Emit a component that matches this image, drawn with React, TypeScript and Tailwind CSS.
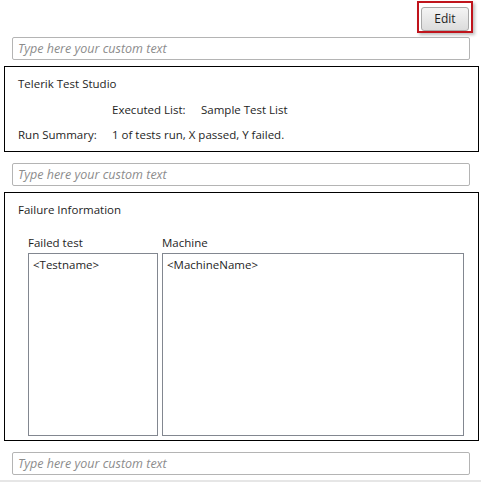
import React from 'react';

const font = { fontFamily: '"Open Sans", "Segoe UI", sans-serif' };

function CustomText() {
  return (
    <div className="ml-[12px] w-[458px] h-[23px] rounded-[2px] border border-[#b4b4b4] bg-white flex items-center pl-[5px]">
      <span className="italic text-[12.5px] leading-[16px] text-[#8c8c8c]">Type here your custom text</span>
    </div>
  );
}

export default function App() {
  return (
    <div className="w-[481px] h-[482px] bg-white overflow-hidden text-[#1e1e1e]" style={font}>
      <div className="flex justify-end pr-[8px] pt-[1px]">
        <div className="w-[56px] h-[32px] border-2 border-[#c0141c] p-[2px] shadow-[2px_2px_3px_rgba(0,0,0,0.25)]">
          <button className="w-full h-full rounded-[3px] border border-[#a8a8a8] bg-gradient-to-b from-[#f4f4f4] to-[#dcdcdc] text-[12px] leading-[16px] text-[#1e1e1e]">
            Edit
          </button>
        </div>
      </div>

      <div className="mt-[4px]">
        <CustomText />
      </div>

      <div className="mt-[6px] ml-[4px] w-[475px] h-[86px] border border-black pl-[13px] pt-[9px] text-[11.5px] leading-[16px]">
        <div>Telerik Test Studio</div>
        <div className="flex mt-[10px]">
          <span className="w-[94px]" />
          <span className="w-[89px]">Executed List:</span>
          <span>Sample Test List</span>
        </div>
        <div className="flex mt-[9px]">
          <span className="w-[94px]">Run Summary:</span>
          <span>1 of tests run, X passed, Y failed.</span>
        </div>
      </div>

      <div className="mt-[11px]">
        <CustomText />
      </div>

      <div className="mt-[6px] ml-[4px] w-[475px] h-[249px] border border-black pl-[13px] pt-[9px] text-[11.5px] leading-[16px]">
        <div>Failure Information</div>
        <div className="flex gap-[4px] ml-[10px] mt-[17px]">
          <div className="w-[130px]">
            <div className="mb-[2px]">Failed test</div>
            <div className="h-[183px] border border-[#828790] pl-[4px] pt-[3px]">&lt;Testname&gt;</div>
          </div>
          <div className="w-[302px]">
            <div className="mb-[2px]">Machine</div>
            <div className="h-[183px] border border-[#828790] pl-[4px] pt-[3px]">&lt;MachineName&gt;</div>
          </div>
        </div>
      </div>

      <div className="mt-[11px]">
        <CustomText />
      </div>

      <div className="mt-[5px] h-[2px] bg-[#e6e6e6]" />
    </div>
  );
}
